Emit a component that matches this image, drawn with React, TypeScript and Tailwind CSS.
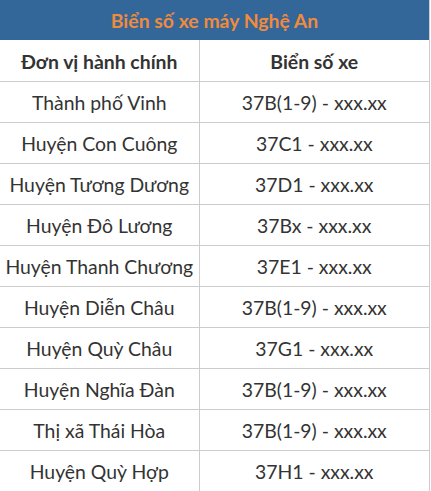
const rows: [string, string][] = [
  ["Thành phố Vinh", "37B(1-9) - xxx.xx"],
  ["Huyện Con Cuông", "37C1 - xxx.xx"],
  ["Huyện Tương Dương", "37D1 - xxx.xx"],
  ["Huyện Đô Lương", "37Bx - xxx.xx"],
  ["Huyện Thanh Chương", "37E1 - xxx.xx"],
  ["Huyện Diễn Châu", "37B(1-9) - xxx.xx"],
  ["Huyện Quỳ Châu", "37G1 - xxx.xx"],
  ["Huyện Nghĩa Đàn", "37B(1-9) - xxx.xx"],
  ["Thị xã Thái Hòa", "37B(1-9) - xxx.xx"],
  ["Huyện Quỳ Hợp", "37H1 - xxx.xx"],
]

export default function App() {
  return (
    <div className="w-[431px] bg-white" style={{ fontFamily: "Lato, 'Liberation Sans', sans-serif" }}>
      <table className="w-[430px] border-collapse text-[#333] table-fixed">
        <colgroup>
          <col className="w-[199px]" />
          <col />
        </colgroup>
        <thead>
          <tr>
            <th colSpan={2} className="h-[40px] pt-[2px] bg-[#336699] text-center text-[19.4px] font-bold text-[#f08a3c] border-r border-[#ccc]">
              Biển số xe máy Nghệ An
            </th>
          </tr>
          <tr className="h-[41px] border-b border-[#ccc]">
            <th className="pt-[2px] text-center text-[19.4px] font-bold border-r border-[#ccc]">Đơn vị hành chính</th>
            <th className="pt-[2px] text-center text-[19.4px] font-bold border-r border-[#ccc]">Biển số xe</th>
          </tr>
        </thead>
        <tbody>
          {rows.map(([a, b]) => (
            <tr key={a} className="h-[41px] border-b border-[#ccc]">
              <td className="pt-[2px] text-center text-[19.4px] border-r border-[#ccc]">{a}</td>
              <td className="pt-[2px] text-center text-[19.4px] border-r border-[#ccc]">{b}</td>
            </tr>
          ))}
        </tbody>
      </table>
    </div>
  )
}
